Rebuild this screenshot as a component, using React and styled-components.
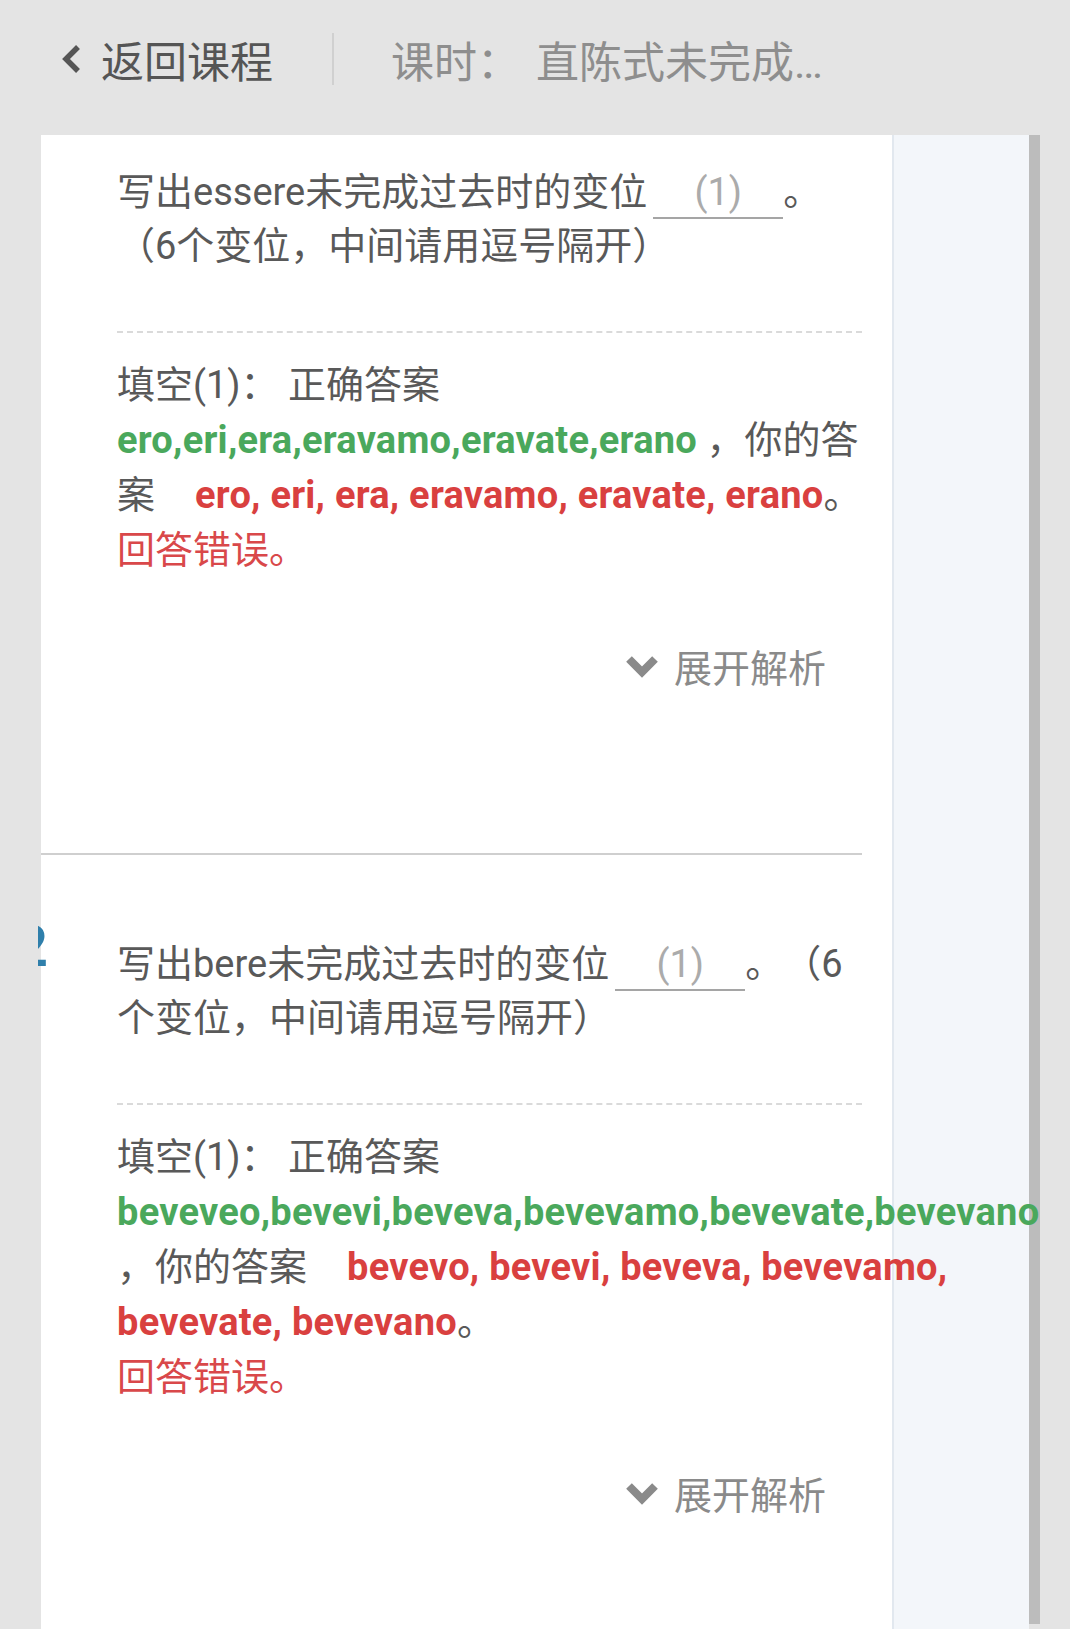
import React from 'react';
import styled, { createGlobalStyle } from 'styled-components';

const GlobalStyle = createGlobalStyle`
  html, body {
    margin: 0;
    padding: 0;
    height: 100%;
    overflow: hidden;
    background: #e4e4e4;
  }
  body {
    font-family: Roboto, "Noto Sans CJK SC", sans-serif;
    text-spacing-trim: space-all;
  }
  #root {
    height: 100%;
  }
`;

const Styled = {
  Page: styled.div`
    height: 100%;
    display: flex;
    flex-direction: column;
  `,
  Header: styled.div`
    height: 118px;
    flex-shrink: 0;
    display: flex;
    align-items: center;
    padding-left: 60px;
    font-size: 43px;
  `,
  BackLink: styled.div`
    display: flex;
    align-items: center;
    gap: 17px;
    color: #555555;
  `,
  Divider: styled.div`
    width: 2px;
    height: 52px;
    background: #d0d0d0;
    margin: 0 57px 0 59px;
  `,
  LessonTitle: styled.div`
    display: flex;
    color: #8e8e8e;
  `,
  LessonName: styled.span`
    margin-left: 16px;
    max-width: 300px;
    overflow: hidden;
    white-space: nowrap;
    text-overflow: ellipsis;
  `,
  Main: styled.div`
    flex: 1;
    min-height: 0;
    display: flex;
    margin-top: 17px;
    padding-left: 41px;
  `,
  Card: styled.div`
    width: 851px;
    flex-shrink: 0;
    background: #ffffff;
    position: relative;
    z-index: 1;
  `,
  List: styled.div`
    /* the list is scrolled: the top of question 1 is out of view */
    margin-top: -52px;
  `,
  Item: styled.div`
    position: relative;
    margin-right: 30px;
    padding: 82px 0 160px 76px;
    border-bottom: 2px solid #cfcfcf;
  `,
  Number: styled.div`
    position: absolute;
    left: -3px;
    top: 62px;
    width: 10px;
    overflow: hidden;
    display: flex;
    justify-content: flex-end;
    font-size: 58px;
    line-height: 58px;
    font-weight: 700;
    color: #2f7fab;
  `,
  Stem: styled.p`
    margin: 0;
    font-size: 38px;
    line-height: 54px;
    color: #595959;
  `,
  Blank: styled.span`
    display: inline-block;
    min-width: 130px;
    margin-left: 6px;
    text-align: center;
    line-height: 38px;
    padding-bottom: 6px;
    color: #ababab;
    border-bottom: 2px solid #a5a5a5;
  `,
  DashedRule: styled.div`
    margin-top: 58px;
    border-top: 2px dashed #dadada;
  `,
  Answer: styled.div`
    margin-top: 25px;
    font-size: 38px;
    line-height: 55px;
    color: #595959;
    white-space: nowrap;
  `,
  Correct: styled.span`
    color: #4aa85c;
    font-weight: 700;
    letter-spacing: 0.25px;
  `,
  Given: styled.span`
    color: #d9403f;
    font-weight: 700;
    letter-spacing: 0.25px;
    margin-left: ${props => (props.$indent ? '40px' : '0')};
  `,
  Verdict: styled.span`
    color: #d9484a;
  `,
  Expand: styled.div`
    display: flex;
    justify-content: flex-end;
    align-items: center;
    gap: 14px;
    height: 55px;
    margin-top: 60px;
    padding-right: 36px;
    font-size: 38px;
    color: #8a8a8a;
  `,
  SidePanel: styled.div`
    width: 137px;
    flex-shrink: 0;
    box-sizing: border-box;
    border-left: 2px solid #e2e8ef;
    background: #f3f6fa;
  `,
  ScrollThumb: styled.div`
    width: 11px;
    flex-shrink: 0;
    margin-bottom: 5px;
    background: #bcbcbc;
  `,
};

function ChevronDown() {
  return (
    <svg width="36" height="24" viewBox="0 0 36 24">
      <polyline points="5,5 18,18 31,5" fill="none" stroke="#8a8a8a" strokeWidth="8" strokeLinejoin="miter" />
    </svg>
  );
}

function ChevronLeft() {
  return (
    <svg width="24" height="32" viewBox="0 0 24 32">
      <polyline points="18,4 6,16 18,28" fill="none" stroke="#555555" strokeWidth="5.5" strokeLinejoin="miter" />
    </svg>
  );
}

function Question({ number, verb, children }) {
  return (
    <Styled.Item>
      {number && <Styled.Number>{number}</Styled.Number>}
      <Styled.Stem>
        写出{verb}未完成过去时的变位<Styled.Blank>(1)</Styled.Blank>。（6个变位，中间请用逗号隔开）
      </Styled.Stem>
      <Styled.DashedRule />
      <Styled.Answer>{children}</Styled.Answer>
      <Styled.Expand>
        <ChevronDown />
        展开解析
      </Styled.Expand>
    </Styled.Item>
  );
}

function App() {
  return (
    <Styled.Page>
      <GlobalStyle />
      <Styled.Header>
        <Styled.BackLink>
          <ChevronLeft />
          返回课程
        </Styled.BackLink>
        <Styled.Divider />
        <Styled.LessonTitle>
          课时：
          <Styled.LessonName>直陈式未完成过去时</Styled.LessonName>
        </Styled.LessonTitle>
      </Styled.Header>

      <Styled.Main>
        <Styled.Card>
          <Styled.List>
            <Question verb="essere">
              填空(1)： 正确答案
              <br />
              <Styled.Correct>ero,eri,era,eravamo,eravate,erano</Styled.Correct> ，你的答
              <br />
              案<Styled.Given $indent>ero, eri, era, eravamo, eravate, erano</Styled.Given>。
              <br />
              <Styled.Verdict>回答错误。</Styled.Verdict>
            </Question>
            <Question number="2" verb="bere">
              填空(1)： 正确答案
              <br />
              <Styled.Correct>beveveo,bevevi,beveva,bevevamo,bevevate,bevevano</Styled.Correct>
              <br />
              ，你的答案<Styled.Given $indent>bevevo, bevevi, beveva, bevevamo,</Styled.Given>
              <br />
              <Styled.Given>bevevate, bevevano</Styled.Given>。
              <br />
              <Styled.Verdict>回答错误。</Styled.Verdict>
            </Question>
          </Styled.List>
        </Styled.Card>
        <Styled.SidePanel />
        <Styled.ScrollThumb />
      </Styled.Main>
    </Styled.Page>
  );
}

export default App;
